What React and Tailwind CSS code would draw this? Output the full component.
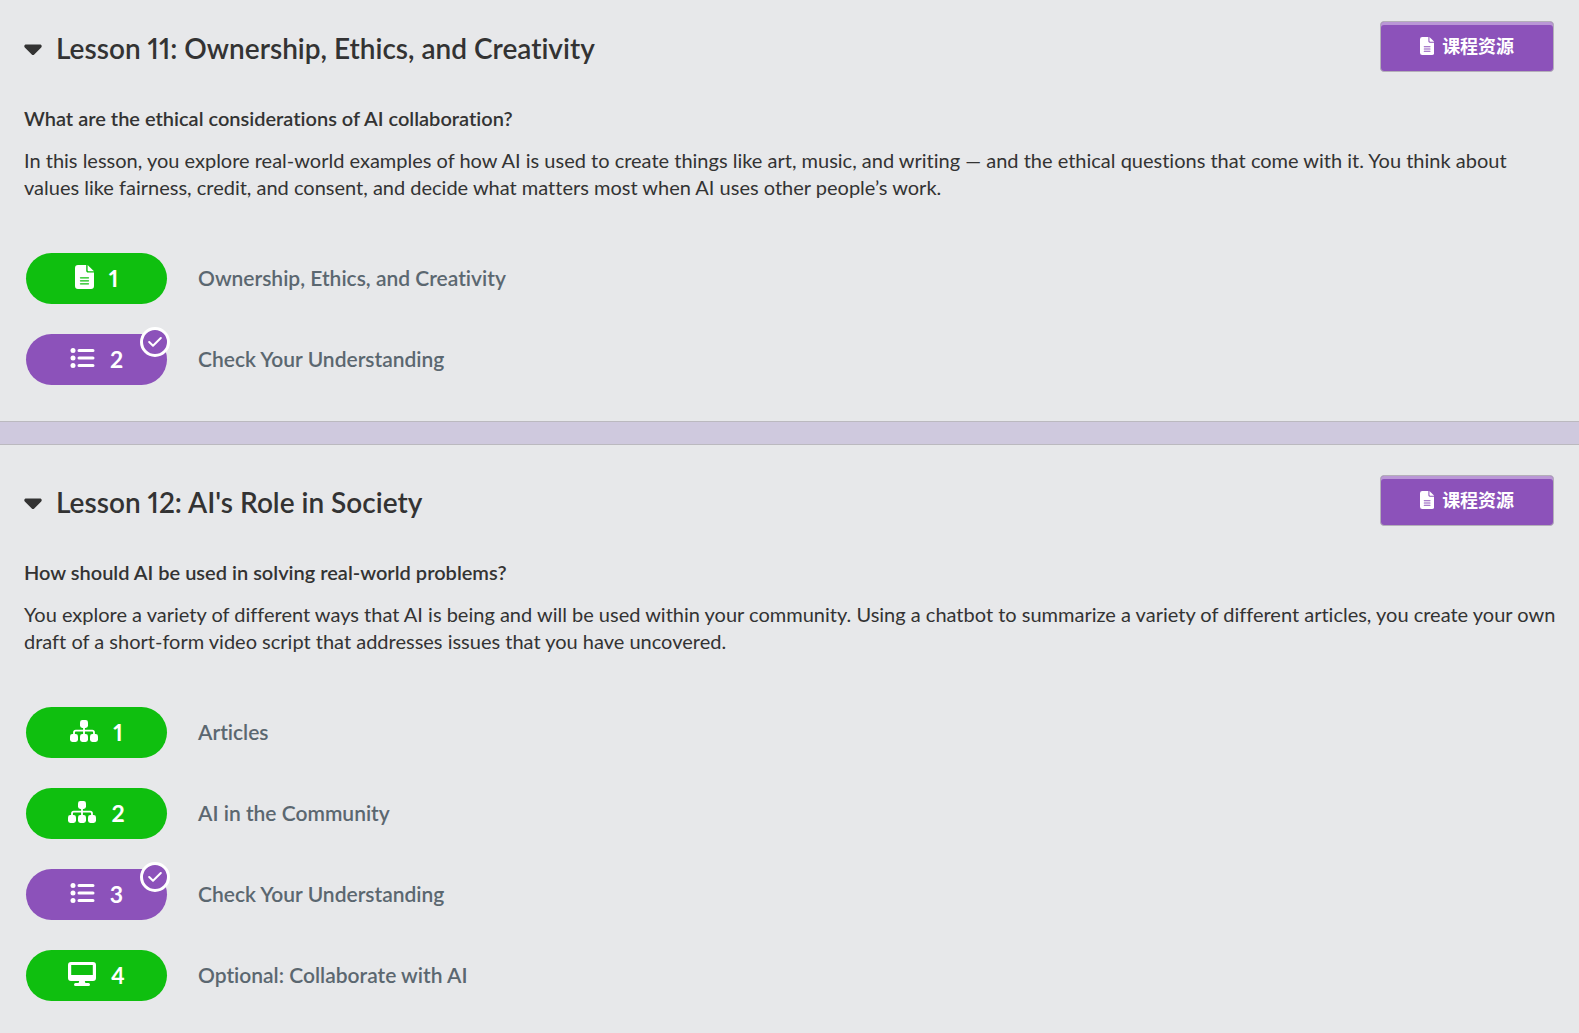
import React, { useState } from 'react';
import { FaCaretDown } from 'react-icons/fa6';

function FileIcon({ className }) {
  return (
    <svg viewBox="0 0 19 24" fill="currentColor" className={`aspect-[19/24] ${className}`} aria-hidden="true">
      <path
        fillRule="evenodd"
        d="M3 0h8.2v5.8c0 1 .8 1.8 1.8 1.8h6V21a3 3 0 0 1-3 3H3a3 3 0 0 1-3-3V3a3 3 0 0 1 3-3Zm2.5 12.2a.6.6 0 0 0 0 1.3h8a.6.6 0 0 0 0-1.3h-8Zm0 3a.6.6 0 0 0 0 1.3h8a.6.6 0 0 0 0-1.3h-8Zm0 3a.6.6 0 0 0 0 1.3h8a.6.6 0 0 0 0-1.3h-8Z"
      />
      <path d="M12.6 0 19 6.2h-5.4a1 1 0 0 1-1-1V0Z" />
    </svg>
  );
}

function SitemapIcon({ className }) {
  return (
    <svg viewBox="0 0 28 24" fill="currentColor" className={`aspect-[28/24] ${className}`} aria-hidden="true">
      <rect x="10" y="1" width="8" height="8" rx="2.4" />
      <rect x="0" y="15" width="8" height="8" rx="2.4" />
      <rect x="10" y="15" width="8" height="8" rx="2.4" />
      <rect x="20" y="15" width="8" height="8" rx="2.4" />
      <path
        d="M14 8v8M4 16v-2.6c0-1 .8-1.8 1.8-1.8h16.4c1 0 1.8.8 1.8 1.8V16"
        fill="none"
        stroke="currentColor"
        strokeWidth="1.8"
      />
    </svg>
  );
}

function ListIcon({ className }) {
  return (
    <svg viewBox="0 0 25 24" fill="currentColor" className={`aspect-[25/24] ${className}`} aria-hidden="true">
      <circle cx="3" cy="4.5" r="2.5" />
      <circle cx="3" cy="12" r="2.5" />
      <circle cx="3" cy="19.5" r="2.5" />
      <path d="M9 4.5h14M9 12h14M9 19.5h14" stroke="currentColor" strokeWidth="3" strokeLinecap="round" />
    </svg>
  );
}

function DesktopIcon({ className }) {
  return (
    <svg viewBox="0 0 28 24" fill="currentColor" className={`aspect-[28/24] ${className}`} aria-hidden="true">
      <path
        fillRule="evenodd"
        d="M3 0h22a3 3 0 0 1 3 3v13a3 3 0 0 1-3 3h-8.2l.6 2h3.1a1.5 1.5 0 0 1 0 3h-13a1.5 1.5 0 0 1 0-3h3.1l.6-2H3a3 3 0 0 1-3-3V3a3 3 0 0 1 3-3Zm.2 3.1v10h21.6v-10H3.2Z"
      />
    </svg>
  );
}

function CheckIcon({ className }) {
  return (
    <svg viewBox="0 0 14 14" fill="none" className={className} aria-hidden="true">
      <path
        d="M1.2 7 5 10.8 12.8 3"
        stroke="currentColor"
        strokeWidth="2"
        strokeLinecap="round"
        strokeLinejoin="round"
      />
    </svg>
  );
}

const LESSONS = [
  {
    id: 11,
    title: 'Lesson 11: Ownership, Ethics, and Creativity',
    question: 'What are the ethical considerations of AI collaboration?',
    description:
      'In this lesson, you explore real-world examples of how AI is used to create things like art, music, and writing — and the ethical questions that come with it. You think about values like fairness, credit, and consent, and decide what matters most when AI uses other people’s work.',
    levels: [
      { label: 'Ownership, Ethics, and Creativity', icon: FileIcon },
      { label: 'Check Your Understanding', icon: ListIcon, assessment: true },
    ],
  },
  {
    id: 12,
    title: "Lesson 12: AI's Role in Society",
    question: 'How should AI be used in solving real-world problems?',
    description:
      'You explore a variety of different ways that AI is being and will be used within your community. Using a chatbot to summarize a variety of different articles, you create your own draft of a short-form video script that addresses issues that you have uncovered.',
    levels: [
      { label: 'Articles', icon: SitemapIcon },
      { label: 'AI in the Community', icon: SitemapIcon },
      { label: 'Check Your Understanding', icon: ListIcon, assessment: true },
      { label: 'Optional: Collaborate with AI', icon: DesktopIcon },
    ],
  },
];

function LevelRow({ number, label, icon: Icon, assessment }) {
  return (
    <li>
      <a href={`#level-${number}`} className="flex items-center gap-[31px]">
        <span
          className={`relative flex h-[51px] w-[141px] items-center justify-center gap-[15px] rounded-full text-white
            ${assessment ? 'bg-[#8c52ba]' : 'bg-[#0fbf0f]'}`}
        >
          <Icon className="mb-1 h-6 w-auto flex-shrink-0" />
          <span className="text-[23px] font-bold proportional-nums">{number}</span>
          {assessment && (
            <span className="absolute -right-[3px] -top-[7px] flex size-[30px] items-center justify-center rounded-full border-3 border-white bg-[#8c52ba]">
              <CheckIcon className="size-[14px]" />
            </span>
          )}
        </span>
        <span className="pb-[2px] text-[21px] font-semibold text-[#5b6770]">{label}</span>
      </a>
    </li>
  );
}

function Lesson({ title, question, description, levels, first }) {
  const [open, setOpen] = useState(true);

  return (
    <section className={`pl-6 pr-[25px] pb-9 ${first ? 'pt-[21px]' : 'pt-[30px]'}`}>
      <header className="flex items-center justify-between">
        <h2 className="pt-[2px]">
          <button
            type="button"
            onClick={() => setOpen(!open)}
            aria-expanded={open}
            className="flex items-center gap-[14px] text-[28px] leading-9 font-semibold proportional-nums"
          >
            <FaCaretDown size={28} className={`-mx-[5px] ${open ? '' : '-rotate-90'}`} />
            <span>{title}</span>
          </button>
        </h2>
        <button
          type="button"
          className="flex h-[51px] w-[174px] items-center justify-center gap-2 rounded-[4px] border border-[#b4afb9] bg-[#8c52ba] pb-[2px] text-lg font-bold text-white shadow-[inset_0_3px_0_#ba97d6]"
        >
          <FileIcon className="h-[18px] w-auto" />
          <span>课程资源</span>
        </button>
      </header>

      {open && (
        <>
          <div className="mt-[33px] text-[20px] leading-[27px]">
            <p className="font-semibold">{question}</p>
            <p className="-mr-2 mt-[15px]">{description}</p>
          </div>
          <ul className="mt-[52px] space-y-[30px] pl-[2px]">
            {levels.map((level, i) => (
              <LevelRow key={i} number={i + 1} {...level} />
            ))}
          </ul>
        </>
      )}
    </section>
  );
}

export default function App() {
  return (
    <main className="min-h-screen bg-[#e7e8ea] font-[Lato,'Noto_Sans_CJK_SC',sans-serif] text-[#333] [font-variant-ligatures:no-common-ligatures]">
      {LESSONS.map((lesson, i) => (
        <React.Fragment key={lesson.id}>
          {i > 0 && <div className="h-6 border-y border-[#bbb9bf] bg-[#cfc9de]" />}
          <Lesson {...lesson} first={i === 0} />
        </React.Fragment>
      ))}
    </main>
  );
}
